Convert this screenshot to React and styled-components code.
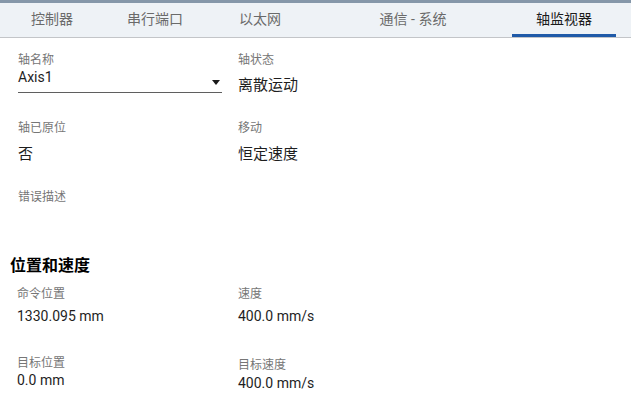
import React from "react";
import styled, { createGlobalStyle } from "styled-components";

const Global = createGlobalStyle`
  html, body { margin: 0; padding: 0; background: #ffffff; }
  body { font-family: Roboto, "Noto Sans CJK SC", sans-serif; }
`;

const Page = styled.div`
  width: 631px;
  background: #ffffff;
`;

const TabBar = styled.div`
  display: flex;
  height: 34px;
  background: #eef2f6;
  border-top: 3px solid #8597a9;
  border-bottom: 1px solid #c3c5c8;
`;

const Tab = styled.div`
  position: relative;
  flex: 0 0 ${(p) => p.$w}px;
  display: flex;
  align-items: center;
  justify-content: center;
  padding-bottom: 3px;
  box-sizing: border-box;
  font-size: 14px;
  line-height: 20px;
  color: ${(p) => (p.$active ? "#1b1b1b" : "#6a6a6a")};
  white-space: pre;
  &::after {
    content: "";
    display: ${(p) => (p.$active ? "block" : "none")};
    position: absolute;
    left: 0;
    right: 0;
    bottom: 0;
    height: 3px;
    background: #1f5aa8;
  }
`;

const Section = styled.div`
  display: grid;
  grid-template-columns: ${(p) => p.$col}px 1fr;
  row-gap: ${(p) => p.$rowGap || 0}px;
  padding: ${(p) => p.$top || 0}px 0 0 ${(p) => p.$left}px;
`;

const Field = styled.div`
  display: flex;
  flex-direction: column;
  margin-top: ${(p) => p.$shift || 0}px;
`;

const Label = styled.div`
  font-size: 12px;
  line-height: 16px;
  color: #767676;
`;

const Value = styled.div`
  font-size: ${(p) => (p.$cjk ? 15 : 14)}px;
  line-height: 20px;
  color: #1e1e1e;
  margin-top: ${(p) => p.$gap}px;
  min-height: 20px;
`;

const Select = styled.div`
  display: flex;
  align-items: center;
  justify-content: space-between;
  width: 204px;
  padding-bottom: 6px;
  border-bottom: 1px solid #5f5f5f;
`;

const SelectText = styled.span`
  font-size: 14px;
  line-height: 18px;
  color: #1e1e1e;
`;

const Caret = styled.span`
  width: 0;
  height: 0;
  border-left: 4px solid transparent;
  border-right: 4px solid transparent;
  border-top: 5px solid #1a1a1a;
  margin: 10px 2px 0 0;
`;

const Heading = styled.h2`
  margin: 22px 0 0 10px;
  font-size: 16px;
  line-height: 22px;
  font-weight: 700;
  color: #000;
`;

export default function App() {
  const tabs = [
    { t: "控制器", w: 104 },
    { t: "串行端口", w: 102 },
    { t: "以太网", w: 108 },
    { t: "通信 - 系统", w: 198 },
    { t: "轴监视器", w: 104, active: true },
  ];
  return (
    <Page>
      <Global />
      <TabBar>
        {tabs.map((x) => (
          <Tab key={x.t} $w={x.w} $active={x.active}>
            {x.t}
          </Tab>
        ))}
      </TabBar>

      <Section $col={220} $left={18} $top={14} $rowGap={25}>
        <Field>
          <Label>轴名称</Label>
          <Select>
            <SelectText>Axis1</SelectText>
            <Caret />
          </Select>
        </Field>
        <Field>
          <Label>轴状态</Label>
          <Value $gap={7} $cjk>离散运动</Value>
        </Field>
        <Field>
          <Label>轴已原位</Label>
          <Value $gap={8} $cjk>否</Value>
        </Field>
        <Field>
          <Label>移动</Label>
          <Value $gap={8} $cjk>恒定速度</Value>
        </Field>
        <Field>
          <Label>错误描述</Label>
          <Value $gap={8}></Value>
        </Field>
        <Field />
      </Section>

      <Heading>位置和速度</Heading>

      <Section $col={221} $left={17} $top={9} $rowGap={29}>
        <Field>
          <Label>命令位置</Label>
          <Value $gap={4}>1330.095 mm</Value>
        </Field>
        <Field>
          <Label>速度</Label>
          <Value $gap={4}>400.0 mm/s</Value>
        </Field>
        <Field>
          <Label>目标位置</Label>
          <Value $gap={-1}>0.0 mm</Value>
        </Field>
        <Field $shift={2}>
          <Label>目标速度</Label>
          <Value $gap={0}>400.0 mm/s</Value>
        </Field>
      </Section>
    </Page>
  );
}
